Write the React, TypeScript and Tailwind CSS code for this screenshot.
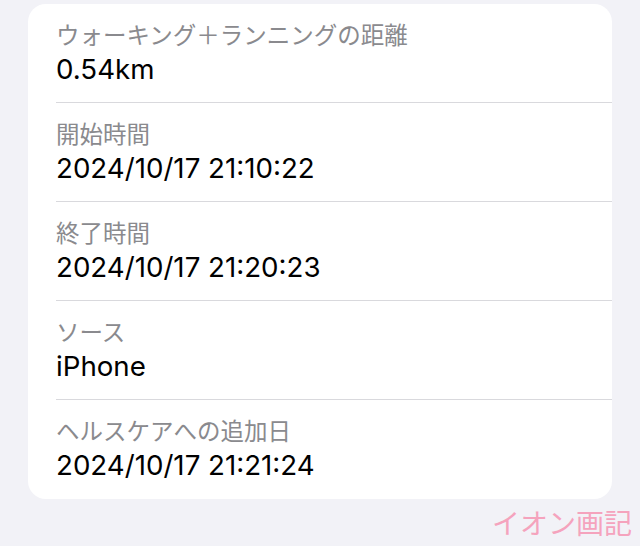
import React from "react";

const rows = [
  { label: "ウォーキング＋ランニングの距離", value: "0.54km" },
  { label: "開始時間", value: "2024/10/17 21:10:22" },
  { label: "終了時間", value: "2024/10/17 21:20:23" },
  { label: "ソース", value: "iPhone" },
  { label: "ヘルスケアへの追加日", value: "2024/10/17 21:21:24" },
];

export default function App() {
  return (
    <div
      className="flex h-[546px] w-[640px] flex-col bg-[#f2f2f7] pt-1"
      style={{ fontFamily: '"Inter", "Noto Sans CJK JP", sans-serif' }}
    >
      <div className="ml-[28px] w-[584px] overflow-hidden rounded-[18px] bg-white">
        {rows.map((r, i) => (
          <div key={r.label} className="pl-[28px]">
            <div
              className={`flex h-[99px] flex-col pt-[16px] ${
                i < rows.length - 1 ? "border-b border-[#d9d9dd]" : ""
              }`}
            >
              <div className="text-[23.5px] leading-[32px] text-[#8a8a8e]">{r.label}</div>
              <div className="text-[27.7px] leading-[34px] text-black">{r.value}</div>
            </div>
          </div>
        ))}
      </div>
      <div className="mt-[8px] pr-[8px] text-right text-[28px] leading-[34px] text-[#f5a3bd]">
        イオン画記
      </div>
    </div>
  );
}
